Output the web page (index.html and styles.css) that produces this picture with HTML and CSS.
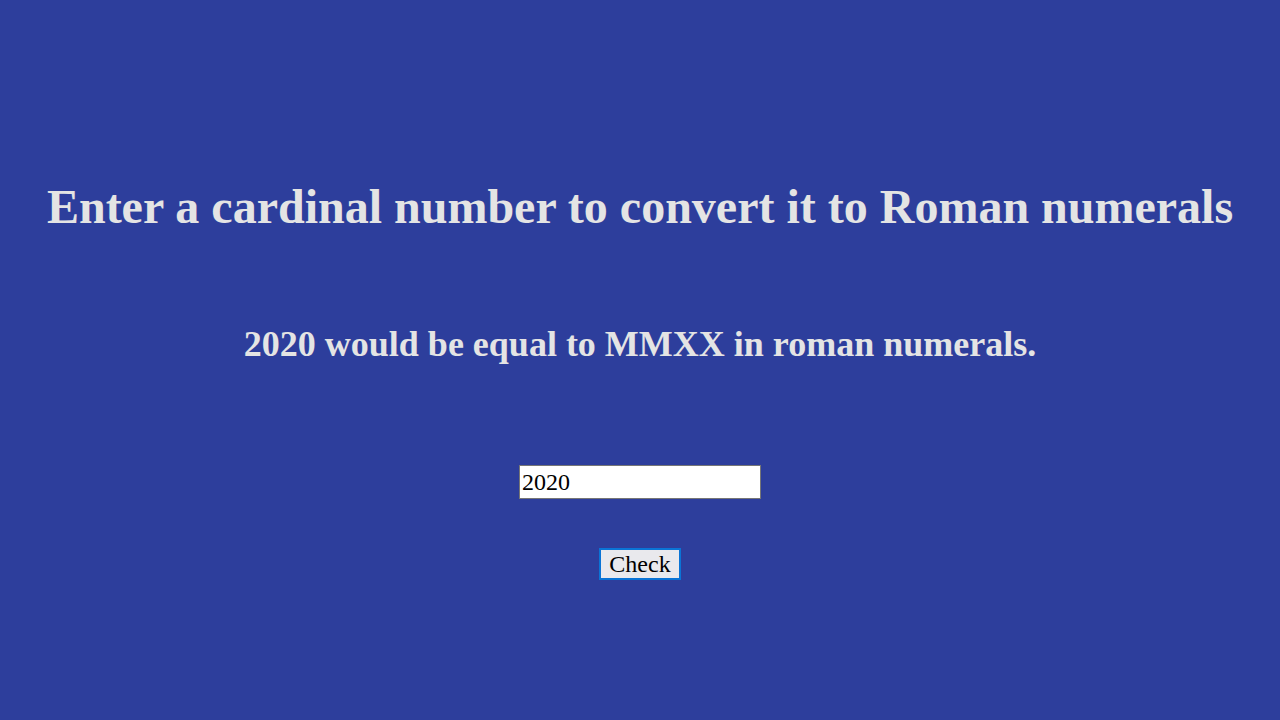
FILE: index.html
```html
<!DOCTYPE html>
<html>
<head>
<meta charset="utf-8">
<link rel="stylesheet" href="styles.css">
</head>
<body>
<main class="page">
  <h1 class="title">Enter a cardinal number to convert it to Roman numerals</h1>
  <h2 class="result">2020 would be equal to MMXX in roman numerals.</h2>
  <form class="form">
    <input class="num-input" type="text" value="2020">
    <button class="check-btn" type="button">Check</button>
  </form>
</main>
</body>
</html>
```
FILE: styles.css
```css
html, body {
  margin: 0;
  padding: 0;
  height: 100%;
}
body {
  background: #2d3e9c;
  color: #e4e4e4;
  font-family: "Liberation Serif", "Times New Roman", serif;
}
.page {
  display: flex;
  flex-direction: column;
  align-items: center;
  padding-top: 179px;
  text-align: center;
}
.title {
  font-size: 48px;
  font-weight: bold;
  margin: 0;
  line-height: 55px;
}
.result {
  font-size: 36px;
  font-weight: bold;
  margin: 90px 0 0;
  line-height: 41px;
}
.form {
  display: flex;
  flex-direction: column;
  align-items: center;
  margin-top: 100px;
}
.num-input {
  width: 242px;
  height: 34px;
  box-sizing: border-box;
  font-family: "Liberation Serif", "Times New Roman", serif;
  font-size: 24px;
  color: #000;
  background: #fff;
  border: 1px solid #767676;
  padding: 1px 2px;
  margin: 0;
}
.check-btn {
  margin-top: 49px;
  width: 82px;
  height: 32px;
  box-sizing: border-box;
  font-family: "Liberation Serif", "Times New Roman", serif;
  font-size: 24px;
  color: #000;
  background: #e9e9ed;
  border: 2px solid #0a74d6;
  padding: 0;
  line-height: 1;
}
```
